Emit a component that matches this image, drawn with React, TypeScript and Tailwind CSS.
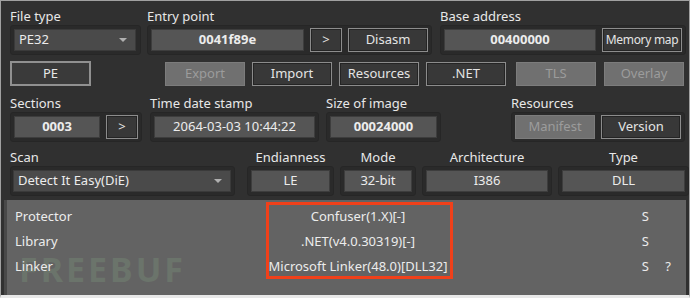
import React from "react";

type BtnProps = { label: string; w: string; disabled?: boolean; tight?: boolean };

const Btn = ({ label, w, disabled, tight }: BtnProps) => (
  <div
    className={`${w} h-[24px] flex items-center justify-center border whitespace-nowrap ${
      tight ? "text-[12px] tracking-[-0.3px]" : "text-[13px]"
    } ${
      disabled
        ? "bg-[#707070] border-[#7c7c7c] text-[#9c9c9c]"
        : "bg-[#383838] border-[#8c8c8c] text-[#e4e4e4] shadow-[inset_0_0_0_1px_#242424]"
    }`}
  >
    {label}
  </div>
);

const Field = ({ value, w, bold }: { value: string; w: string; bold?: boolean }) => (
  <div
    className={`${w} h-[22px] flex items-center justify-center bg-[#555555] border border-[#3d3d3d] text-[13px] text-[#ececec] ${
      bold ? "font-bold" : ""
    }`}
  >
    {value}
  </div>
);

const Combo = ({ value, w }: { value: string; w: string }) => (
  <div className={`${w} h-[22px] flex items-center justify-between pl-1 pr-2 bg-[#4a4a4a] border border-[#3a3a3a] text-[13px] text-[#ececec]`}>
    <span>{value}</span>
    <span className="w-0 h-0 border-l-[4px] border-r-[4px] border-t-[4px] border-l-transparent border-r-transparent border-t-[#b0b0b0]" />
  </div>
);

const Label = ({ text, cls = "" }: { text: string; cls?: string }) => (
  <div className={`h-[18px] text-[13px] text-[#e8e8e8] leading-[18px] ${cls}`}>{text}</div>
);

const Box = ({ children, cls = "" }: { children: React.ReactNode; cls?: string }) => (
  <div className={`flex items-center gap-[6px] bg-[#2a2a2a] border border-[#262626] rounded-[3px] px-[3px] h-[30px] ${cls}`}>
    {children}
  </div>
);

const rows = [
  { name: "Protector", value: "Confuser(1.X)[-]", q: "" },
  { name: "Library", value: ".NET(v4.0.30319)[-]", q: "" },
  { name: "Linker", value: "Microsoft Linker(48.0)[DLL32]", q: "?" },
];

export default function App() {
  return (
    <div
      className="w-[690px] h-[298px] bg-[#303030] border border-[#a0a0a0] border-b-[3px] border-b-[#e8e8e8] overflow-hidden relative flex flex-col"
      style={{ fontFamily: '"Noto Sans", "DejaVu Sans", sans-serif' }}
    >
      {/* row 1 */}
      <div className="flex pt-[6px] pl-[9px]">
        <div className="flex flex-col">
          <Label text="File type" />
          <Box cls="w-[131px]">
            <Combo value="PE32" w="w-[122px]" />
          </Box>
        </div>
        <div className="flex flex-col ml-[6px]">
          <Label text="Entry point" />
          <Box>
            <Field value="0041f89e" w="w-[153px]" bold />
            <Btn label=">" w="w-[32px]" />
            <Btn label="Disasm" w="w-[80px]" />
          </Box>
        </div>
        <div className="flex flex-col ml-[8px]">
          <Label text="Base address" />
          <Box>
            <Field value="00400000" w="w-[152px]" bold />
            <Btn label="Memory map" w="w-[80px]" tight />
          </Box>
        </div>
      </div>

      {/* row 2 */}
      <div className="flex items-center pl-[9px] mt-[6px]">
        <div className="w-[81px] h-[25px] flex items-center justify-center border-2 border-[#909090] bg-[#3a3a3a] text-[13px] text-[#e8e8e8]">
          PE
        </div>
        <div className="ml-[74px] flex gap-[7px]">
          <Btn label="Export" w="w-[80px]" disabled />
          <Btn label="Import" w="w-[80px]" />
          <Btn label="Resources" w="w-[80px]" />
          <Btn label=".NET" w="w-[80px]" />
        </div>
        <div className="ml-[10px] flex gap-[8px]">
          <Btn label="TLS" w="w-[80px]" disabled />
          <Btn label="Overlay" w="w-[80px]" disabled />
        </div>
      </div>

      {/* row 3 */}
      <div className="flex pt-[8px] pl-[9px]">
        <div className="flex flex-col">
          <Label text="Sections" />
          <Box>
            <Field value="0003" w="w-[86px]" bold />
            <Btn label=">" w="w-[32px]" />
          </Box>
        </div>
        <div className="flex flex-col ml-[8px]">
          <Label text="Time date stamp" />
          <Box>
            <Field value="2064-03-03 10:44:22" w="w-[161px]" />
          </Box>
        </div>
        <div className="flex flex-col ml-[7px]">
          <Label text="Size of image" />
          <Box>
            <Field value="00024000" w="w-[107px]" bold />
          </Box>
        </div>
        <div className="flex flex-col ml-[70px]">
          <Label text="Resources" />
          <Box>
            <Btn label="Manifest" w="w-[80px]" disabled />
            <Btn label="Version" w="w-[80px]" />
          </Box>
        </div>
      </div>

      {/* row 4 */}
      <div className="flex pt-[6px] pl-[9px]">
        <div className="flex flex-col">
          <Label text="Scan" />
          <Box cls="pl-[2px]">
            <Combo value="Detect It Easy(DiE)" w="w-[218px]" />
          </Box>
        </div>
        <div className="flex flex-col items-center ml-[12px]">
          <Label text="Endianness" />
          <Box>
            <Field value="LE" w="w-[79px]" />
          </Box>
        </div>
        <div className="flex flex-col items-center ml-[6px]">
          <Label text="Mode" />
          <Box>
            <Field value="32-bit" w="w-[68px]" />
          </Box>
        </div>
        <div className="flex flex-col items-center ml-[6px]">
          <Label text="Architecture" />
          <Box>
            <Field value="I386" w="w-[122px]" />
          </Box>
        </div>
        <div className="flex flex-col items-center ml-[6px]">
          <Label text="Type" />
          <Box>
            <Field value="DLL" w="w-[123px]" />
          </Box>
        </div>
      </div>

      {/* results */}
      <div className="relative mx-[3px] mt-[4px] flex-1 bg-[#636363] border-l-[3px] border-[#484848] pt-[4px] text-[13px] text-[#ececec]">
        <div className="absolute left-[12px] top-[52px] text-[34px] font-bold tracking-[3px] text-[#6b746b] leading-none select-none">
          FREEBUF
        </div>
        {rows.map((r) => (
          <div key={r.name} className="relative flex items-center h-[25px]">
            <div className="w-[258px] pl-[8px]">{r.name}</div>
            <div className="w-[186px] text-center">{r.value}</div>
            <div className="w-[198px] text-right">S</div>
            <div className="w-[22px] text-right">{r.q}</div>
          </div>
        ))}
        <div className="absolute left-[259px] top-[2px] w-[187px] h-[77px] border-[3px] border-[#f0401a]" />
      </div>
    </div>
  );
}
